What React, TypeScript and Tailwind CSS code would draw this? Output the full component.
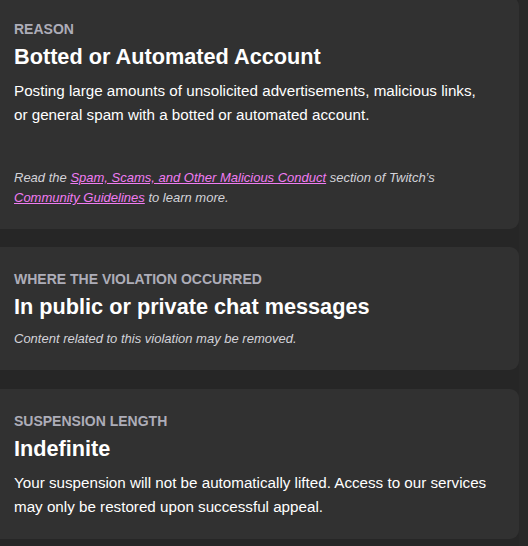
const font = { fontFamily: '"Liberation Sans", Arial, sans-serif' };

function Label({ children }: { children: React.ReactNode }) {
  return (
    <div className="text-[14px] font-bold uppercase leading-[18px] text-[#adadb8]">{children}</div>
  );
}

function Title({ children }: { children: React.ReactNode }) {
  return <div className="mt-[5px] text-[21.7px] font-bold leading-[28px] text-white">{children}</div>;
}

function Link({ children }: { children: React.ReactNode }) {
  return <a className="text-[#f07cf2] underline">{children}</a>;
}

export default function App() {
  return (
    <div className="flex h-[546px] w-[528px] overflow-hidden bg-[#262626]" style={font}>
      <div className="flex w-[519px] flex-col gap-[18px] -mt-[3px]">
        {/* Reason */}
        <div className="rounded-r-[9px] bg-[#313131] pb-[21px] pl-[14px] pr-[30px] pt-[23px]">
          <Label>Reason</Label>
          <Title>Botted or Automated Account</Title>
          <p className="mt-[8px] text-[15.2px] leading-[23.5px] text-white">
            Posting large amounts of unsolicited advertisements, malicious links, or general spam with a botted or
            automated account.
          </p>
          <p className="mt-[42px] text-[13px] italic leading-[20px] text-[#d3d3d9]">
            Read the <Link>Spam, Scams, and Other Malicious Conduct</Link> section of Twitch’s{" "}
            <Link>Community Guidelines</Link> to learn more.
          </p>
        </div>

        {/* Where */}
        <div className="rounded-r-[9px] bg-[#313131] pb-[21px] pl-[14px] pr-[30px] pt-[23px]">
          <Label>Where the violation occurred</Label>
          <Title>In public or private chat messages</Title>
          <p className="mt-[8px] text-[13px] italic leading-[20px] text-[#d3d3d9]">
            Content related to this violation may be removed.
          </p>
        </div>

        {/* Length */}
        <div className="mt-[1px] rounded-r-[9px] bg-[#313131] pb-[20px] pl-[14px] pr-[30px] pt-[23px]">
          <Label>Suspension length</Label>
          <Title>Indefinite</Title>
          <p className="mt-[8px] text-[15.2px] leading-[24px] text-white">
            Your suspension will not be automatically lifted. Access to our services may only be restored upon
            successful appeal.
          </p>
        </div>
      </div>
      <div className="flex-1 bg-[#282828]" />
    </div>
  );
}
